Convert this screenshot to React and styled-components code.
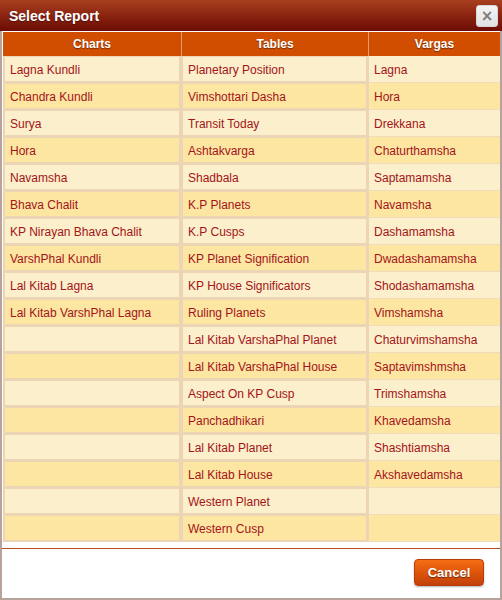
import React from 'react';
import styled, { createGlobalStyle } from 'styled-components';

const charts = [
  'Lagna Kundli', 'Chandra Kundli', 'Surya', 'Hora', 'Navamsha', 'Bhava Chalit',
  'KP Nirayan Bhava Chalit', 'VarshPhal Kundli', 'Lal Kitab Lagna', 'Lal Kitab VarshPhal Lagna',
];
const tables = [
  'Planetary Position', 'Vimshottari Dasha', 'Transit Today', 'Ashtakvarga', 'Shadbala',
  'K.P Planets', 'K.P Cusps', 'KP Planet Signification', 'KP House Significators',
  'Ruling Planets', 'Lal Kitab VarshaPhal Planet', 'Lal Kitab VarshaPhal House',
  'Aspect On KP Cusp', 'Panchadhikari', 'Lal Kitab Planet', 'Lal Kitab House',
  'Western Planet', 'Western Cusp',
];
const vargas = [
  'Lagna', 'Hora', 'Drekkana', 'Chaturthamsha', 'Saptamamsha', 'Navamsha', 'Dashamamsha',
  'Dwadashamamsha', 'Shodashamamsha', 'Vimshamsha', 'Chaturvimshamsha', 'Saptavimshmsha',
  'Trimshamsha', 'Khavedamsha', 'Shashtiamsha', 'Akshavedamsha',
];
const ROWS = 18;

const GlobalStyle = createGlobalStyle`
  body {
    margin: 0;
    font-family: "Liberation Sans", Arial, sans-serif;
    background: #fff;
  }
`;

const Dialog = styled.div`
  width: 502px;
  height: 600px;
  box-sizing: border-box;
  border: 2px solid #b8a29c;
  border-top: none;
  background: #fff;
  display: flex;
  flex-direction: column;
`;

const TitleBar = styled.div`
  height: 31px;
  margin: 0 -2px;
  background: linear-gradient(to bottom, #a8401f 0%, #8a2410 50%, #6c0c04 100%);
  display: flex;
  align-items: center;
  justify-content: space-between;
  padding: 0 4px 0 9px;
  h1 {
    margin: 0;
    color: #fff;
    font-size: 14px;
    font-weight: bold;
    text-shadow: 0 1px 1px rgba(0, 0, 0, 0.4);
  }
`;

const CloseButton = styled.button`
  width: 22px;
  height: 22px;
  padding: 0;
  border: 1px solid #d6d6d6;
  border-radius: 3px;
  background: linear-gradient(#f4f4f4, #e2e2e2);
  color: #7a7a7a;
  font-size: 15px;
  font-weight: bold;
  line-height: 20px;
  font-family: "DejaVu Sans", sans-serif;
`;

const Grid = styled.div`
  margin-top: 1px;
  margin-left: 1px;
  display: grid;
  grid-template-columns: 178px 187px 132px;
`;

const Head = styled.div`
  height: 24px;
  background: #d14e00;
  color: #fff;
  font-size: 12px;
  font-weight: bold;
  text-align: center;
  line-height: 25px;
  text-shadow: 0 1px 1px rgba(0, 0, 0, 0.45);
  border-left: ${(p) => (p.$first ? 'none' : '1px solid #ec9a6a')};
`;

const Cell = styled.div`
  height: 27px;
  box-sizing: border-box;
  background: ${(p) => (p.$odd ? '#fde6a2' : '#fcefcb')};
  border-top: ${(p) => (p.$boxed ? '1px solid #ebd5b5' : 'none')};
  border-right: ${(p) => (p.$boxed ? '2px solid #ebd5b5' : 'none')};
  border-bottom: ${(p) => (p.$boxed ? '2px solid #ebd5b5' : '1px solid #f0dcbc')};
  border-left: ${(p) => (p.$boxed ? '2px solid #ebd5b5' : '1px solid #ebd5b5')};
  color: #a3141a;
  font-size: 12px;
  line-height: 22px;
  padding: ${(p) => (p.$boxed ? '2px' : '3px')} 0 0 5px;
  white-space: nowrap;
`;

const Footer = styled.div`
  margin-top: 6px;
  border-top: 1px solid #b8491c;
  flex: 1;
  display: flex;
  justify-content: flex-end;
  align-items: flex-start;
  padding: 10px 16px 0 0;
`;

const CancelButton = styled.button`
  width: 70px;
  height: 27px;
  border: 1px solid #b63c08;
  border-radius: 4px;
  background: linear-gradient(to bottom, #f56d14 0%, #db530a 55%, #c2400a 100%);
  color: #fff;
  font-family: "Liberation Sans", Arial, sans-serif;
  font-size: 13px;
  font-weight: bold;
  text-shadow: 0 1px 1px rgba(0, 0, 0, 0.5);
  box-shadow: 0 1px 2px rgba(0, 0, 0, 0.3);
`;

export default function App() {
  const rows = [];
  for (let i = 0; i < ROWS; i++) {
    const odd = i % 2 === 1;
    rows.push(
      <Cell key={`c${i}`} $odd={odd} $boxed>{charts[i] || ''}</Cell>,
      <Cell key={`t${i}`} $odd={odd} $boxed>{tables[i] || ''}</Cell>,
      <Cell key={`v${i}`} $odd={odd}>{vargas[i] || ''}</Cell>
    );
  }
  return (
    <>
      <GlobalStyle />
      <Dialog>
        <TitleBar>
          <h1>Select Report</h1>
          <CloseButton>×</CloseButton>
        </TitleBar>
        <Grid>
          <Head $first>Charts</Head>
          <Head>Tables</Head>
          <Head>Vargas</Head>
          {rows}
        </Grid>
        <Footer>
          <CancelButton>Cancel</CancelButton>
        </Footer>
      </Dialog>
    </>
  );
}
